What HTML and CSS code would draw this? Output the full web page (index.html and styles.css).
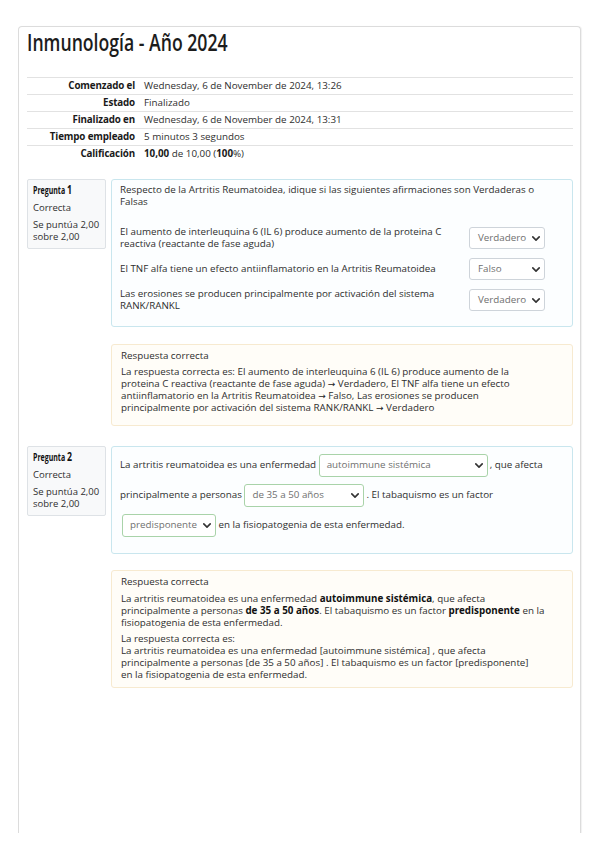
FILE: index.html
```html
<!DOCTYPE html>
<html lang="es">
<head>
<meta charset="utf-8">
<title>Inmunología - Año 2024</title>
<link rel="stylesheet" href="styles.css">
</head>
<body>
<div class="page">
  <h1 class="title"><span class="narrow title-text">Inmunología - Año 2024</span></h1>

  <div class="summary">
    <div class="row"><div class="label">Comenzado el</div><div class="value">Wednesday, 6 de November de 2024, 13:26</div></div>
    <div class="row"><div class="label">Estado</div><div class="value">Finalizado</div></div>
    <div class="row"><div class="label">Finalizado en</div><div class="value">Wednesday, 6 de November de 2024, 13:31</div></div>
    <div class="row"><div class="label">Tiempo empleado</div><div class="value">5 minutos 3 segundos</div></div>
    <div class="row"><div class="label">Calificación</div><div class="value"><b>10,00</b> de 10,00 (<b>100</b>%)</div></div>
  </div>

  <div class="que">
    <div class="info">
      <h3 class="qtitle"><span class="narrow qtitle-text">Pregunta <span class="qno">1</span></span></h3>
      <div class="state">Correcta</div>
      <div class="grade">Se puntúa 2,00<br>sobre 2,00</div>
    </div>
    <div class="content">
      <div class="formulation">
        <div class="qtext">Respecto de la Artritis Reumatoidea, idique si las siguientes afirmaciones son Verdaderas o<br>Falsas</div>
        <div class="match">
          <div class="stem">El aumento de interleuquina 6 (IL 6) produce aumento de la proteina C<br>reactiva (reactante de fase aguda)</div>
          <div class="sel"><span>Verdadero</span><svg class="chev" viewBox="0 0 10 6" width="8" height="5"><polyline points="1,1 5,5 9,1"/></svg></div>
          <div class="stem">El TNF alfa tiene un efecto antiinflamatorio en la Artritis Reumatoidea</div>
          <div class="sel"><span>Falso</span><svg class="chev" viewBox="0 0 10 6" width="8" height="5"><polyline points="1,1 5,5 9,1"/></svg></div>
          <div class="stem">Las erosiones se producen principalmente por activación del sistema<br>RANK/RANKL</div>
          <div class="sel"><span>Verdadero</span><svg class="chev" viewBox="0 0 10 6" width="8" height="5"><polyline points="1,1 5,5 9,1"/></svg></div>
        </div>
      </div>
      <div class="outcome outcome-1">
        <div class="head">Respuesta correcta</div>
        <div class="feedback">La respuesta correcta es: El aumento de interleuquina 6 (IL 6) produce aumento de la<br>proteina C reactiva (reactante de fase aguda) <span class="arrow">→</span> Verdadero, El TNF alfa tiene un efecto<br>antiinflamatorio en la Artritis Reumatoidea <span class="arrow">→</span> Falso, Las erosiones se producen<br>principalmente por activación del sistema RANK/RANKL <span class="arrow">→</span> Verdadero</div>
      </div>
    </div>
  </div>

  <div class="que que-2">
    <div class="info">
      <h3 class="qtitle"><span class="narrow qtitle-text">Pregunta <span class="qno">2</span></span></h3>
      <div class="state">Correcta</div>
      <div class="grade">Se puntúa 2,00<br>sobre 2,00</div>
    </div>
    <div class="content">
      <div class="formulation gap-form">
        <div class="gaptext">La artritis reumatoidea es una enfermedad <span class="gsel g-1"><span>autoimmune sistémica</span><svg class="chev" viewBox="0 0 10 6" width="8" height="5"><polyline points="1,1 5,5 9,1"/></svg></span>, que afecta<br>principalmente a personas <span class="gsel g-2"><span>de 35 a 50 años</span><svg class="chev" viewBox="0 0 10 6" width="8" height="5"><polyline points="1,1 5,5 9,1"/></svg></span>. El tabaquismo es un factor<br><span class="gsel g-3"><span>predisponente</span><svg class="chev" viewBox="0 0 10 6" width="8" height="5"><polyline points="1,1 5,5 9,1"/></svg></span> en la fisiopatogenia de esta enfermedad.</div>
      </div>
      <div class="outcome outcome-2">
        <div class="head">Respuesta correcta</div>
        <div class="feedback">La artritis reumatoidea es una enfermedad <b>autoimmune sistémica</b>, que afecta<br>principalmente a personas <b>de 35 a 50 años</b>. El tabaquismo es un factor <b>predisponente</b> en la<br>fisiopatogenia de esta enfermedad.</div>
        <div class="rightanswer">La respuesta correcta es:<br>La artritis reumatoidea es una enfermedad [autoimmune sistémica] , que afecta<br>principalmente a personas [de 35 a 50 años] . El tabaquismo es un factor [predisponente]<br>en la fisiopatogenia de esta enfermedad.</div>
      </div>
    </div>
  </div>
</div>
</body>
</html>
```

FILE: styles.css
```css
* { box-sizing: border-box; }

html, body {
  margin: 0;
  padding: 0;
  background: #ffffff;
}

body {
  font-family: "Open Sans", "Noto Sans", sans-serif;
  font-size: 9.8px;
  line-height: 12px;
  color: #2e2e2e;
}

.page {
  margin: 26px 18px 0;
  height: 807px;
  border: 1px solid #dcdcdc;
  border-bottom: none;
  border-radius: 4px 4px 0 0;
  padding: 1px 7px 0 8px;
  box-shadow: 1px 0 1px rgba(0, 0, 0, 0.06);
}

.narrow {
  display: inline-block;
  transform-origin: 0 50%;
  white-space: nowrap;
}

.title {
  margin: 0;
  font-family: "Open Sans", "Noto Sans", sans-serif;
  font-weight: 600;
  font-size: 24px;
  line-height: 28px;
  color: #1c1c1c;
}

.title-text { transform: scaleX(0.735); }

.summary {
  margin-top: 21px;
}

.row {
  display: grid;
  grid-template-columns: 117px 1fr;
  align-items: center;
  height: 17px;
  border-top: 1px solid #e2e2e2;
  white-space: nowrap;
}

.label {
  text-align: right;
  padding-right: 9px;
  font-weight: 700;
  color: #1a1a1a;
  letter-spacing: -0.15px;
}

.value b { color: #1a1a1a; }

.que {
  display: flex;
  align-items: flex-start;
  gap: 5px;
  margin-top: 17px;
}

.que-2 { margin-top: 20px; }

.info {
  flex: none;
  width: 79px;
  border: 1px solid #dee2e6;
  background: #f8f9fa;
  border-radius: 2px;
  padding: 3px 3px 5px 5px;
  font-size: 9.5px;
  white-space: nowrap;
}

.qtitle {
  margin: 0;
  font-size: 10px;
  line-height: 14px;
  font-weight: 700;
  color: #111;
}

.qtitle-text { transform: scaleX(0.7); }

.qno { font-size: 12.5px; }

.state { margin-top: 5px; }
.grade { margin-top: 5px; }

.content { flex: 1; min-width: 0; }

.formulation {
  border: 1px solid #c9e6ee;
  background: #fcfeff;
  border-radius: 3px;
  padding: 4px 27px 14px 8px;
}

.qtext, .stem, .gaptext, .feedback, .rightanswer, .head { white-space: nowrap; }

.match {
  margin-top: 18px;
  display: grid;
  grid-template-columns: 1fr 76px;
  column-gap: 9px;
  row-gap: 8px;
  align-items: center;
}

.sel {
  display: flex;
  align-items: center;
  justify-content: space-between;
  height: 22px;
  border: 1px solid #ced4da;
  border-radius: 3px;
  padding: 0 4px 0 8px;
  background: #fff;
  color: #6f6f6f;
}

.chev {
  flex: none;
  fill: none;
  stroke: #333;
  stroke-width: 2;
  stroke-linecap: round;
  stroke-linejoin: round;
}

.gap-form {
  padding: 3px 5px 13px 8px;
}

.gaptext { line-height: 30px; }

.gsel {
  display: inline-flex;
  align-items: center;
  justify-content: space-between;
  vertical-align: middle;
  height: 23px;
  line-height: 12px;
  border: 1px solid #a9d3a9;
  border-radius: 3px;
  padding: 0 4px 0 7px;
  background: #fff;
  color: #6f6f6f;
}

.g-1 { width: 169px; margin-right: 2px; }
.g-2 { width: 120px; margin-right: 2px; }
.g-3 { width: 94px; margin-left: 2px; }

.outcome {
  margin-top: 17px;
  border: 1px solid #f7ead0;
  background: #fffdf8;
  border-radius: 3px;
  padding: 5px 5px 11px 9px;
}

.arrow {
  font-family: "DejaVu Sans", sans-serif;
  font-size: 9px;
  color: #222;
}

.outcome-1 .feedback { margin-top: 4px; }

.outcome-2 { margin-top: 16px; padding-bottom: 6px; }
.outcome-2 .feedback { margin-top: 5px; }
.outcome-2 .rightanswer { margin-top: 4px; }
.outcome b { color: #111; }
```
